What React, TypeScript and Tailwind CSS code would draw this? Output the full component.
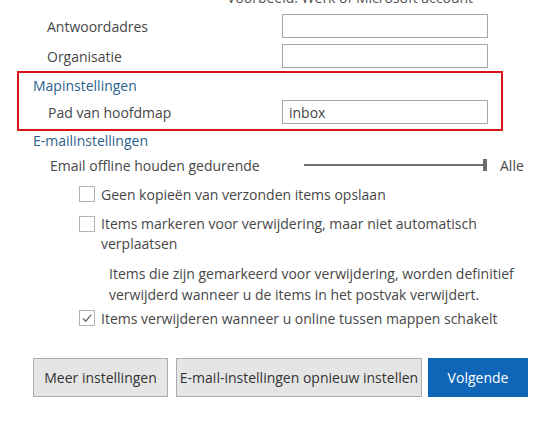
import React from "react";

function TextInput({ value }: { value?: string }) {
    return (
        <div className="flex h-[24px] w-[206px] items-center border border-[#a6a6a6] bg-white px-[6px] text-[#444]">
            {value}
        </div>
    );
}

function Checkbox({ checked }: { checked?: boolean }) {
    return (
        <div className="flex h-[16px] w-[16px] shrink-0 items-center justify-center border border-[#b3b3b3] bg-white">
            {checked && (
                <svg width="12" height="12" viewBox="0 0 12 12" fill="none">
                    <path d="M2 6.5 L4.8 9.2 L10.2 2.6" stroke="#6a6a6a" strokeWidth="1.3" />
                </svg>
            )}
        </div>
    );
}

export default function App() {
    return (
        <div className="relative h-[425px] w-[552px] overflow-hidden bg-white font-['Open_Sans',sans-serif] text-[14px] text-[#474747]">
            {/* cut-off hint at the top */}
            <div className="-mt-[12px] h-[20px] pl-[227px] leading-[20px] text-[#555]">Voorbeeld: Werk of Microsoft account</div>

            {/* account fields */}
            <div className="mt-[6px] flex items-center">
                <div className="w-[282px] pl-[47px]">Antwoordadres</div>
                <TextInput />
            </div>
            <div className="mt-[6px] flex items-center">
                <div className="w-[282px] pl-[47px]">Organisatie</div>
                <TextInput />
            </div>

            {/* Mapinstellingen, highlighted */}
            <div className="ml-[17px] mt-[3px] h-[60px] w-[486px] border-2 border-[#dc141c]">
                <div className="pl-[14px] pt-[3px] leading-[20px] text-[#2d5f8b]">Mapinstellingen</div>
                <div className="mt-[4px] flex items-center">
                    <div className="w-[263px] pl-[29px]">Pad van hoofdmap</div>
                    <TextInput value="inbox" />
                </div>
            </div>

            {/* E-mailinstellingen */}
            <div className="pl-[33px] leading-[20px] text-[#2d5f8b]">E-mailinstellingen</div>
            <div className="mt-[4px] flex h-[20px] items-center">
                <div className="w-[304px] pl-[50px]">Email offline houden gedurende</div>
                <div className="flex w-[183px] items-center">
                    <div className="h-[2px] flex-1 bg-[#707070]" />
                    <div className="h-[12px] w-[4px] bg-[#6e6e6e]" />
                </div>
                <div className="pl-[13px]">Alle</div>
            </div>

            <div className="pl-[79px]">
                <div className="mt-[9px] flex h-[20px] items-center gap-[6px]">
                    <Checkbox />
                    <span>Geen kopieën van verzonden items opslaan</span>
                </div>
                <div className="mt-[10px] flex items-start gap-[6px]">
                    <div className="pt-[2px]">
                        <Checkbox />
                    </div>
                    <span className="leading-[20px]">
                        Items markeren voor verwijdering, maar niet automatisch
                        <br />
                        verplaatsen
                    </span>
                </div>
                <div className="mt-[9px] pl-[30px] leading-[21px]">
                    Items die zijn gemarkeerd voor verwijdering, worden definitief
                    <br />
                    verwijderd wanneer u de items in het postvak verwijdert.
                </div>
                <div className="mt-[3px] flex h-[20px] items-center gap-[6px]">
                    <Checkbox checked />
                    <span>Items verwijderen wanneer u online tussen mappen schakelt</span>
                </div>
            </div>

            {/* buttons */}
            <div className="mt-[30px] flex gap-[8px] pl-[33px]">
                <button className="h-[39px] w-[135px] border border-[#adadad] bg-[#e5e5e5] text-[#333]">Meer instellingen</button>
                <button className="h-[39px] w-[246px] border border-[#adadad] bg-[#e5e5e5] text-[#333]">E-mail-instellingen opnieuw instellen</button>
                <button className="ml-[-2px] h-[39px] w-[100px] bg-[#0f65b7] text-white">Volgende</button>
            </div>
        </div>
    );
}
